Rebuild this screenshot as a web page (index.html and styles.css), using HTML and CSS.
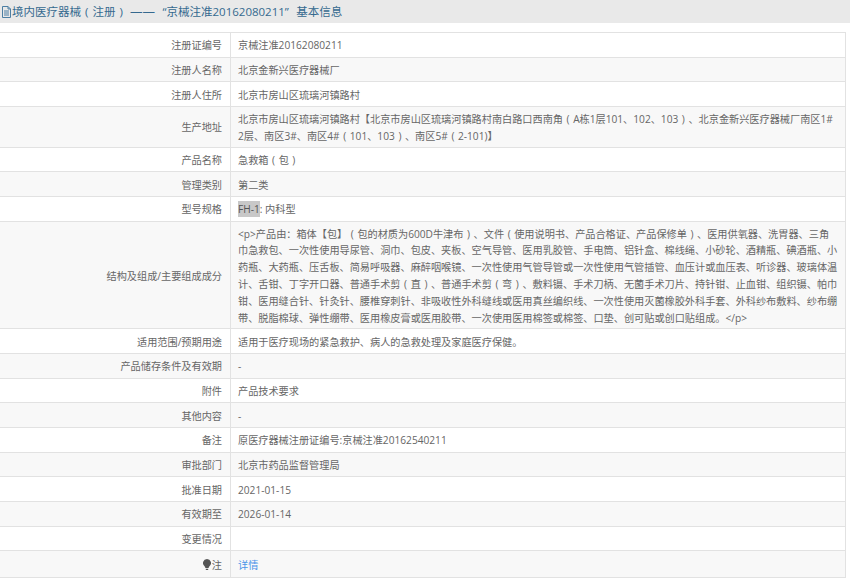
FILE: index.html
```html
<!DOCTYPE html>
<html lang="zh-CN">
<head>
  <meta charset="UTF-8">
  <title>境内医疗器械（注册）基本信息</title>
  <link rel="stylesheet" href="styles.css">
</head>
<body>
  <h1 class="page-title">
    <svg class="title-icon" viewBox="0 0 11 12" width="11" height="12"><path d="M1.500 .5h5.500l2.500 2.500v8.500h-8zM7 .5v2.500h2.500M3 5h5M3 7h5M3 9h5" fill="none" stroke="#4d7fa3" stroke-width="1"/></svg>
    <span>境内医疗器械<span class="bk">(</span>注册<span class="bk">)</span> <span class="dash">——</span><span class="quote-open">“</span>京械注准20162080211<span class="quote-close">”</span>基本信息</span>
  </h1>

  <table class="info-table">
    <tr><th>注册证编号</th><td>京械注准20162080211</td></tr>
    <tr><th>注册人名称</th><td>北京金新兴医疗器械厂</td></tr>
    <tr><th>注册人住所</th><td>北京市房山区琉璃河镇路村</td></tr>
    <tr><th>生产地址</th><td>北京市房山区琉璃河镇路村【北京市房山区琉璃河镇路村南白路口西南角<span class="bk">(</span>A栋1层101、102、103<span class="bk">)</span>、北京金新兴医疗器械厂南区1#<br>2层、南区3#、南区4#<span class="bk">(</span>101、103<span class="bk">)</span>、南区5#<span class="bk">(</span>2-101)】</td></tr>
    <tr><th>产品名称</th><td>急救箱<span class="bk">(</span>包<span class="bk">)</span></td></tr>
    <tr><th>管理类别</th><td>第二类</td></tr>
    <tr><th>型号规格</th><td><span class="selected">FH-1</span>: 内科型</td></tr>
    <tr><th>结构及组成/主要组成成分</th><td>&lt;p&gt;产品由：箱体【包】<span class="bk">(</span>包的材质为600D牛津布<span class="bk">)</span>、文件<span class="bk">(</span>使用说明书、产品合格证、产品保修单<span class="bk">)</span>、医用供氧器、洗胃器、三角<br>巾急救包、一次性使用导尿管、洞巾、包皮、夹板、空气导管、医用乳胶管、手电筒、铝针盒、棉线绳、小砂轮、酒精瓶、碘酒瓶、小<br>药瓶、大药瓶、压舌板、简易呼吸器、麻醉咽喉镜、一次性使用气管导管或一次性使用气管插管、血压计或血压表、听诊器、玻璃体温<br>计、舌钳、丁字开口器、普通手术剪<span class="bk">(</span>直<span class="bk">)</span>、普通手术剪<span class="bk">(</span>弯<span class="bk">)</span>、敷料镊、手术刀柄、无菌手术刀片、持针钳、止血钳、组织镊、帕巾<br>钳、医用缝合针、针灸针、腰椎穿刺针、非吸收性外科缝线或医用真丝编织线、一次性使用灭菌橡胶外科手套、外科纱布敷料、纱布绷<br>带、脱脂棉球、弹性绷带、医用橡皮膏或医用胶带、一次使用医用棉签或棉签、口垫、创可贴或创口贴组成。&lt;/p&gt;</td></tr>
    <tr><th>适用范围/预期用途</th><td>适用于医疗现场的紧急救护、病人的急救处理及家庭医疗保健。</td></tr>
    <tr><th>产品储存条件及有效期</th><td>-</td></tr>
    <tr><th>附件</th><td>产品技术要求</td></tr>
    <tr><th>其他内容</th><td>-</td></tr>
    <tr><th>备注</th><td>原医疗器械注册证编号:京械注准20162540211</td></tr>
    <tr><th>审批部门</th><td>北京市药品监督管理局</td></tr>
    <tr><th>批准日期</th><td>2021-01-15</td></tr>
    <tr><th>有效期至</th><td>2026-01-14</td></tr>
    <tr><th>变更情况</th><td></td></tr>
    <tr class="last-row">
      <th><svg class="note-icon" viewBox="0 0 8 11" width="8" height="11"><path d="M4 0a4 4 0 0 1 2.400 7.200L5.500 9h-3L1.600 7.200A4 4 0 0 1 4 0zM2.800 9.800h2.400V11H2.800z" fill="#555"/></svg>注</th>
      <td><span class="detail-link">详情</span></td>
    </tr>
  </table>
</body>
</html>
```

FILE: styles.css
```css
html, body {
  margin: 0;
  padding: 0;
  background-color: #fff;
}

body {
  width: 850px;
  height: 580px;
  overflow: hidden;
  font-family: "Open Sans", "Noto Sans CJK SC", sans-serif;
  font-size: 10.17px;
  color: #666;
}

.page-title {
  display: flex;
  align-items: center;
  height: 23px;
  margin: 0 0 9px;
  padding-left: 1px;
  background-color: #e9e9e9;
  color: #35698f;
  font-size: 11.5px;
  font-weight: normal;
}

.dash {
  font-size: 12.5px;
}

/* full-width brackets and quotes sit in a one em slot */
.bk {
  display: inline-block;
  width: 1em;
  text-align: center;
}

.quote-open {
  display: inline-block;
  width: 1em;
  text-align: right;
}

.quote-close {
  display: inline-block;
  width: 1em;
  text-align: left;
}

.info-table {
  width: 846px;
  table-layout: fixed;
  border-collapse: collapse;
  border-top: 1px solid #e2e2e2;
  border-right: 1px solid #e2e2e2;
}

.info-table tr {
  height: 24.67px;
}

.info-table .last-row {
  height: 27px;
}

.info-table tr:nth-child(even) {
  background-color: #f8f8f8;
}

.info-table th,
.info-table td {
  padding: 4px 8px 2px;
  line-height: 16.8px;
  border-bottom: 1.5px solid #e2e2e2;
  font-weight: normal;
  white-space: nowrap;
}

.info-table td {
  padding-left: 7px;
}

.info-table th {
  width: 214px;
  text-align: right;
  border-right: 1px solid #e2e2e2;
}

.selected {
  display: inline-block;
  line-height: 16px;
  background-color: #c8c8c8;
  color: #555;
}

.detail-link {
  color: #4a94e8;
}

.note-icon {
  vertical-align: -1px;
  margin-right: 1px;
}
```
